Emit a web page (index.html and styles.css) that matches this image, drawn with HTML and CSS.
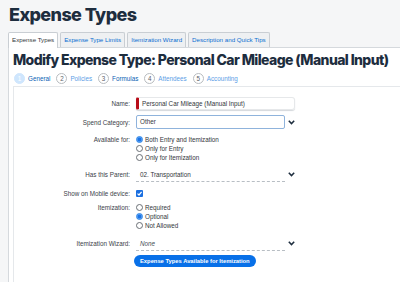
FILE: index.html
```html
<!DOCTYPE html>
<html lang="en">
<head>
  <meta charset="UTF-8">
  <meta name="viewport" content="width=device-width, initial-scale=1.0">
  <title>Expense Types</title>
  <link rel="stylesheet" href="styles.css">
</head>
<body>
  <h1>Expense Types</h1>

  <div class="tabs">
    <div class="tab active">Expense Types</div>
    <div class="tab">Expense Type Limits</div>
    <div class="tab">Itemization Wizard</div>
    <div class="tab">Description and Quick Tips</div>
  </div>

  <div class="panel">
    <h2>Modify Expense Type: Personal Car Mileage (Manual Input)</h2>

    <div class="steps">
      <div class="step current"><span class="num">1</span><span class="step-label">General</span></div>
      <div class="step"><span class="num">2</span><span class="step-label">Policies</span></div>
      <div class="step dark"><span class="num">3</span><span class="step-label">Formulas</span></div>
      <div class="step"><span class="num">4</span><span class="step-label">Attendees</span></div>
      <div class="step"><span class="num">5</span><span class="step-label">Accounting</span></div>
    </div>

    <div class="form">
      <div class="row row-name">
        <div class="label">Name:</div>
        <div class="input required">Personal Car Mileage (Manual Input)</div>
      </div>

      <div class="row row-spend">
        <div class="label">Spend Category:</div>
        <div class="field-wrap">
          <div class="input focused">Other</div>
          <svg class="chevron" width="7" height="5" viewBox="0 0 7 5"><path d="M0.8 0.8 L3.5 3.6 L6.2 0.8" fill="none" stroke="#1d2d3e" stroke-width="1.5"/></svg>
        </div>
      </div>

      <div class="row row-list">
        <div class="label">Available for:</div>
        <div class="options">
          <div class="option"><span class="radio checked"></span>Both Entry and Itemization</div>
          <div class="option"><span class="radio"></span>Only for Entry</div>
          <div class="option"><span class="radio"></span>Only for Itemization</div>
        </div>
      </div>

      <div class="row row-parent">
        <div class="label">Has this Parent:</div>
        <div class="field-wrap">
          <div class="select">02. Transportation</div>
          <svg class="chevron" width="7" height="5" viewBox="0 0 7 5"><path d="M0.8 0.8 L3.5 3.6 L6.2 0.8" fill="none" stroke="#1d2d3e" stroke-width="1.5"/></svg>
        </div>
      </div>

      <div class="row row-mobile">
        <div class="label">Show on Mobile device:</div>
        <div><span class="checkbox"><svg width="7" height="7" viewBox="0 0 7 7"><path d="M1.5 3.6 L3 5 L5.6 1.8" fill="none" stroke="#fff" stroke-width="1.2"/></svg></span></div>
      </div>

      <div class="row row-list row-item">
        <div class="label">Itemization:</div>
        <div class="options">
          <div class="option"><span class="radio"></span>Required</div>
          <div class="option"><span class="radio checked"></span>Optional</div>
          <div class="option"><span class="radio"></span>Not Allowed</div>
        </div>
      </div>

      <div class="row row-wizard">
        <div class="label">Itemization Wizard:</div>
        <div class="field-wrap">
          <div class="select empty">None</div>
          <svg class="chevron" width="7" height="5" viewBox="0 0 7 5"><path d="M0.8 0.8 L3.5 3.6 L6.2 0.8" fill="none" stroke="#1d2d3e" stroke-width="1.5"/></svg>
        </div>
      </div>

      <div class="row row-button">
        <div></div>
        <div><button>Expense Types Available for Itemization</button></div>
      </div>
    </div>
  </div>
</body>
</html>
```

FILE: styles.css
```css
body {
  margin: 0;
  height: 100vh;
  display: flex;
  flex-direction: column;
  background-color: #f5f6f7;
  font-family: "Liberation Sans", Arial, sans-serif;
  color: #32363a;
  overflow: hidden;
}
h1 {
  margin: 0;
  padding: 3px 0 0 9px;
  font-family: Inter, sans-serif;
  font-weight: 800;
  font-size: 18px;
  line-height: 24px;
  color: #1d2d3e;
  letter-spacing: -0.6px;
}
.tabs {
  display: flex;
  gap: 2px;
  margin: 5px 0 0 8px;
  height: 15px;
}
.tab {
  padding: 0 3px;
  font-size: 6.2px;
  line-height: 14px;
  color: #0a6ed1;
  background-color: #eef0f2;
  border: 1px solid #c9ced3;
  border-bottom: none;
  border-radius: 2px 2px 0 0;
}
.tab.active {
  color: #32363a;
  background-color: #fff;
  position: relative;
  z-index: 1;
  height: 15px;
}
.panel {
  flex: 1;
  display: flex;
  flex-direction: column;
  background-color: #fff;
  border-left: 1px solid #d5d9dd;
  border-top: 1px solid #d5d9dd;
  margin-left: 8px;
}
h2 {
  margin: 0;
  padding: 3px 0 0 4px;
  font-family: Inter, sans-serif;
  font-weight: 800;
  font-size: 14px;
  line-height: 18px;
  color: #1d2d3e;
  letter-spacing: -0.6px;
  white-space: nowrap;
}
.steps {
  display: flex;
  gap: 6px;
  padding: 2px 0 0 5px;
  height: 15px;
  align-items: center;
}
.step {
  display: flex;
  align-items: center;
  gap: 3px;
  font-size: 6.3px;
  color: #5c9ee6;
}
.num {
  width: 9px;
  height: 9px;
  border: 1px solid #b8bcc0;
  border-radius: 50%;
  display: flex;
  align-items: center;
  justify-content: center;
  font-size: 6.3px;
  color: #5b6168;
  background-color: #fff;
}
.step.current .num {
  background-color: #cfe6fd;
  border-color: #cfe6fd;
  color: #fff;
}
.step.current, .step.dark {
  color: #0a5fb4;
}
.form {
  flex: 1;
  margin: 0 0 0 4px;
  border-top: 1px solid #e5e8eb;
  border-left: 1px solid #e5e8eb;
  padding-top: 10px;
}
.row {
  display: grid;
  grid-template-columns: 116px 1fr;
  column-gap: 6px;
  align-items: center;
  font-size: 6.3px;
}
.label {
  text-align: right;
  color: #3b4148;
}
.row-list .label {
  align-self: start;
  padding-top: 1px;
}
.row-name {
  height: 13px;
  margin-bottom: 5px;
}
.row-spend {
  height: 14px;
  margin-bottom: 6px;
}
.row-list {
  margin-bottom: 5px;
}
.row-parent {
  height: 15px;
  margin-bottom: 7px;
}
.row-mobile {
  height: 9px;
  margin-bottom: 5px;
}
.row-item {
  margin-bottom: 6px;
}
.row-wizard {
  height: 15px;
  margin-bottom: 4px;
}
.field-wrap {
  display: flex;
  align-items: center;
  gap: 3px;
}
.input {
  box-sizing: border-box;
  height: 13px;
  width: 159px;
  line-height: 11px;
  padding-left: 3px;
  border: 1px solid #e6e8ea;
  border-radius: 2px;
  box-shadow: 0 1px 1px #d4d8dc;
  color: #32363a;
}
.input.required {
  border-left: 3px solid #b80c18;
  border-radius: 2px 3px 3px 2px;
}
.input.focused {
  width: 149px;
  height: 14px;
  line-height: 12px;
  padding-left: 3px;
  border: 1px solid #8fb3dc;
  box-shadow: none;
}
.select {
  box-sizing: border-box;
  width: 149px;
  height: 14px;
  line-height: 13px;
  padding-left: 4px;
  border-bottom: 1px dashed #b8bec4;
  color: #32363a;
}
.select.empty {
  font-style: italic;
  color: #4a5058;
}
.chevron {
  display: block;
}
.options {
  display: flex;
  flex-direction: column;
}
.option {
  display: flex;
  align-items: center;
  height: 9px;
  gap: 1px;
  color: #32363a;
}
.radio {
  box-sizing: border-box;
  width: 7px;
  height: 7px;
  border: 1px solid #6a6f75;
  border-radius: 50%;
  background-color: #fff;
  margin-right: 1px;
}
.radio.checked {
  border-color: #2b84e8;
  background: radial-gradient(circle, #1a73e8 0 1.6px, #5ea3f0 2.2px);
}
.checkbox {
  display: block;
  width: 7px;
  height: 7px;
  background-color: #1b6fe0;
  border-radius: 1px;
}
.checkbox svg {
  display: block;
}
button {
  margin-left: -2px;
  height: 12px;
  padding: 0 6px;
  border: none;
  border-radius: 6px;
  background-color: #0870e8;
  color: #fff;
  font-family: "Liberation Sans", Arial, sans-serif;
  font-weight: bold;
  font-size: 5.8px;
  line-height: 12px;
  cursor: pointer;
}
```
